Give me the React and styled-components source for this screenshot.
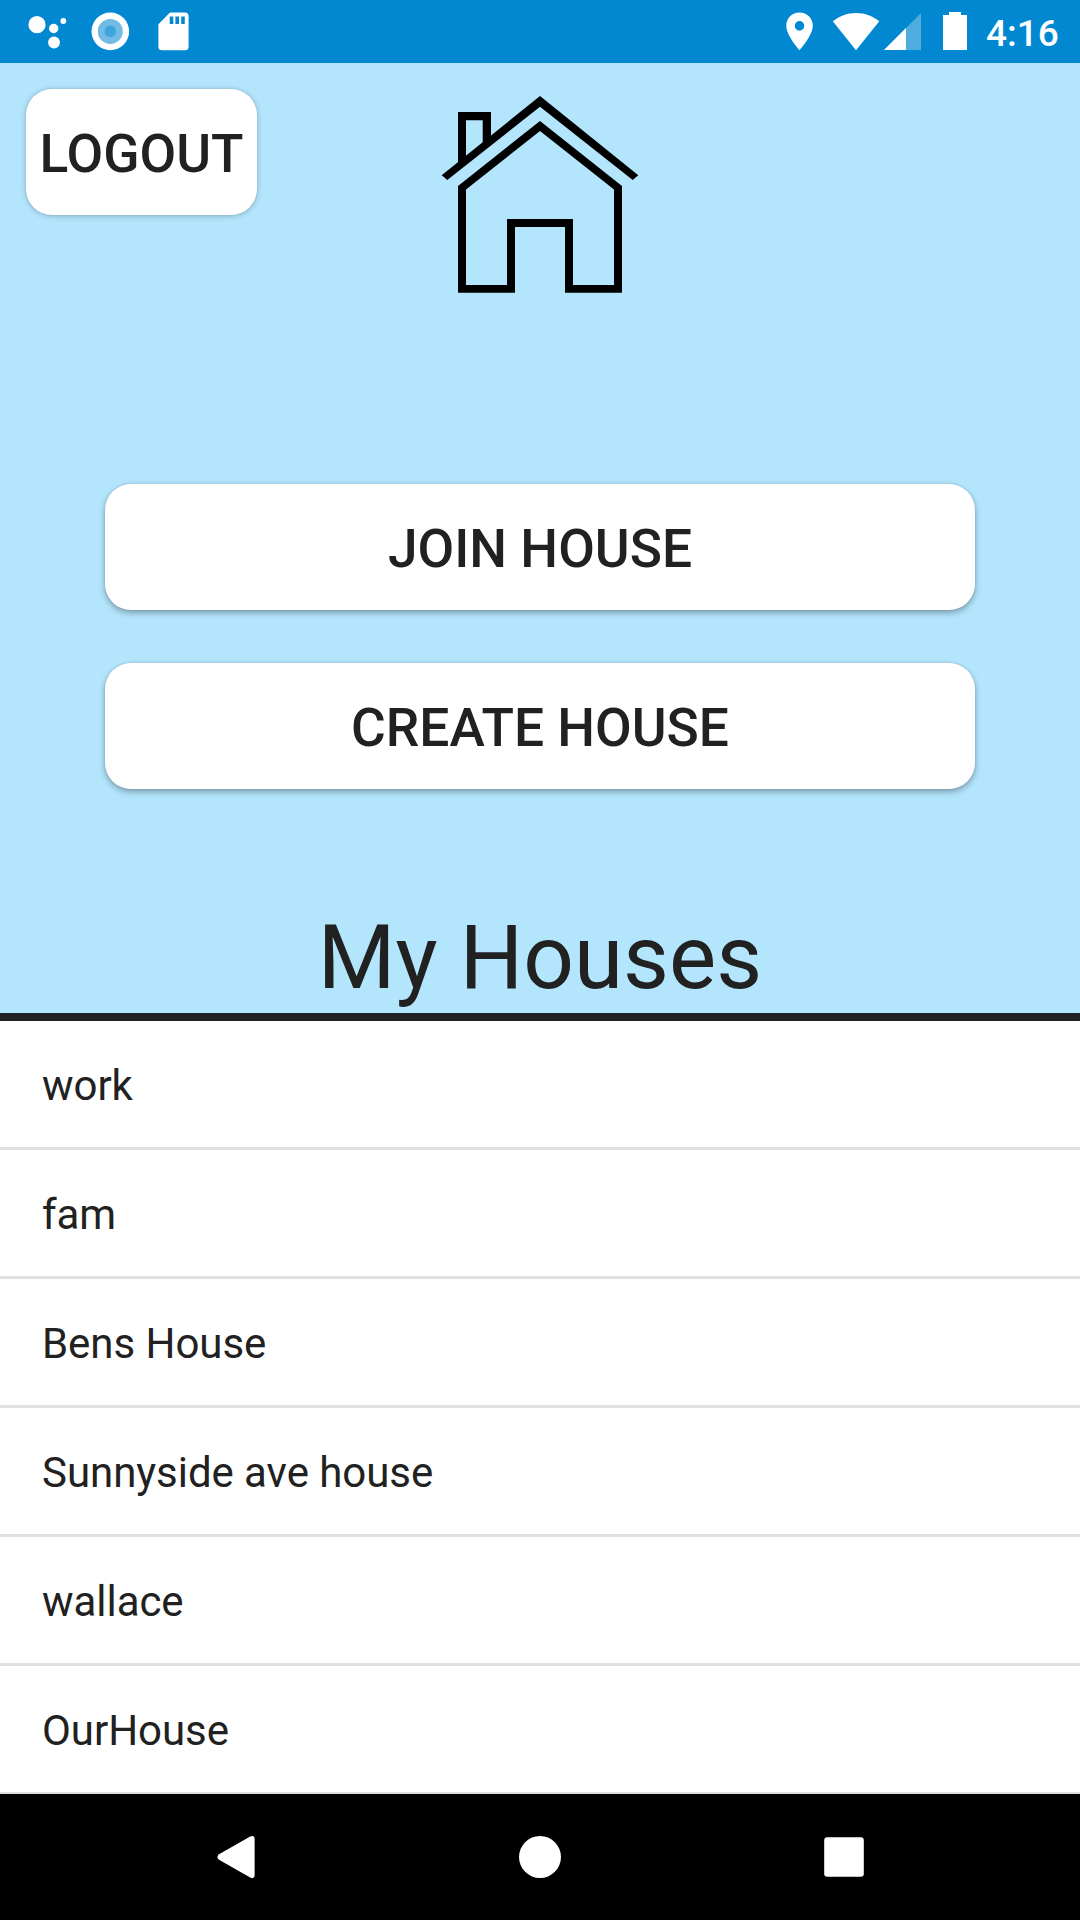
import React from "react";
import styled, { createGlobalStyle } from "styled-components";

const GlobalStyle = createGlobalStyle`
  *, *::before, *::after { box-sizing: border-box; }
  body { margin: 0; background: #fff; }
  button { font: inherit; border: 0; padding: 0; }
`;

const Screen = styled.div`
  display: flex;
  flex-direction: column;
  width: 1080px;
  height: 1920px;
  overflow: hidden;
  color: #212121;
  font-family: Roboto, "Liberation Sans", sans-serif;
`;

const StatusBar = styled.div`
  display: flex;
  flex: none;
  justify-content: space-between;
  height: 63px;
  background: #0288d1;
`;

const StatusGroup = styled.div`
  display: flex;
  padding: 0 ${(p) => p.$right || 0}px 0 ${(p) => p.$left || 0}px;
`;

const StatusIcon = styled.svg`
  display: block;
  flex: none;
  width: ${(p) => p.$width}px;
  height: 63px;
  margin-right: ${(p) => p.$gap || 0}px;
  fill: #fff;
`;

const Clock = styled.span`
  width: 74px;
  color: #fff;
  font-size: 37px;
  font-weight: 500;
  line-height: 68px;
  white-space: nowrap;
`;

const Panel = styled.section`
  display: flex;
  flex: none;
  flex-direction: column;
  height: 958px;
  background: #b3e5fc;
  border-bottom: 8px solid #212121;
`;

const TopRow = styled.header`
  display: grid;
  grid-template-columns: 1fr auto 1fr;
  align-items: start;
  height: 421px;
  padding: 26px 26px 0;
`;

const Button = styled.button`
  display: flex;
  align-items: center;
  justify-content: center;
  width: ${(p) => p.$width}px;
  height: 126px;
  padding-top: 4px;
  border-radius: 26px;
  background: #fff;
  color: #212121;
  font-size: 53.25px;
  font-weight: 500;
  line-height: 62px;
  white-space: nowrap;
  box-shadow: 0 ${(p) => (p.$flat ? 1 : 3)}px 6px rgba(0, 0, 0, ${(p) => (p.$flat ? 0.2 : 0.3)}),
    0 0 3px rgba(0, 0, 0, 0.12);
`;

const HouseLogo = styled.svg`
  display: block;
  width: 200px;
  height: 200px;
  margin-top: 4px;
`;

const Actions = styled.div`
  display: flex;
  flex-direction: column;
  align-items: center;
  gap: 53px;
`;

const Heading = styled.h1`
  margin: auto 0 0;
  font-size: 89px;
  font-weight: 400;
  line-height: 111px;
  text-align: center;
`;

const HouseList = styled.ul`
  flex: 1;
  min-height: 0;
  margin: 0;
  padding: 0;
  overflow: hidden;
  background: #fff;
  list-style: none;
`;

const HouseRow = styled.li`
  height: 129px;
  padding-left: 42px;
  border-bottom: 3px solid #e0e0e0;
  font-size: 42px;
  letter-spacing: -0.05px;
  line-height: 130px;
`;

const NavBar = styled.nav`
  display: flex;
  flex: none;
  align-items: center;
  justify-content: center;
  gap: 178px;
  height: 126px;
  background: #000;
`;

const NavButton = styled.button`
  display: flex;
  width: 126px;
  height: 126px;
  background: transparent;
`;

const NavIcon = styled.svg`
  width: 126px;
  height: 126px;
  fill: #fff;
`;

const houses = ["work", "fam", "Bens House", "Sunnyside ave house", "wallace", "OurHouse"];

const navItems = [
  { name: "Back", shape: <path d="M46 60.2 77.2 42.6Q81.6 40.8 81.6 45V81Q81.6 85.2 77.2 83.4L46 65.8Q42.8 63 46 60.2Z" /> },
  { name: "Home", shape: <circle cx="63" cy="63" r="21" /> },
  { name: "Recents", shape: <rect x="43.2" y="43.2" width="39.6" height="39.6" rx="3" /> },
];

export default function App() {
  return (
    <Screen>
      <GlobalStyle />
      <StatusBar>
        <StatusGroup $left={26}>
          <StatusIcon $width={42} $gap={21} viewBox="26 0 42 63">
            <circle cx="37" cy="24.7" r="8.6" />
            <circle cx="53.7" cy="28.5" r="4.7" />
            <circle cx="63.3" cy="21" r="2.9" />
            <circle cx="54" cy="42.5" r="5.9" />
          </StatusIcon>
          <StatusIcon $width={42} $gap={21} viewBox="89 0 42 63">
            <circle cx="110.3" cy="31.4" r="18.8" />
            <circle cx="110.3" cy="31.4" r="12.5" fill="#71bbe4" />
            <circle cx="110.3" cy="31.4" r="5.8" fill="#40a5dc" />
          </StatusIcon>
          <StatusIcon $width={42} viewBox="152 0 42 63">
            <path
              fillRule="evenodd"
              d="M170 12.6H185A3.6 3.6 0 0 1 188.6 16.2V46.7A3.6 3.6 0 0 1 185 50.3H162A3.6 3.6 0 0 1 158.4 46.7V24.2ZM169.7 16.4V24H173.3V16.4ZM175.4 16.4V24H179V16.4ZM181.2 16.4V24H184.8V16.4Z"
            />
          </StatusIcon>
        </StatusGroup>
        <StatusGroup $right={20}>
          <StatusIcon $width={30} $gap={18} viewBox="785 0 30 63">
            <path
              fillRule="evenodd"
              d="M799.5 12.6C792 12.6 786.3 18.4 786.3 25.8C786.3 35.8 799.5 50.2 799.5 50.2S812.8 35.8 812.8 25.8C812.8 18.4 807 12.6 799.5 12.6ZM799.5 21.1A4.8 4.8 0 1 1 799.5 30.7A4.8 4.8 0 1 1 799.5 21.1Z"
            />
          </StatusIcon>
          <StatusIcon $width={48} $gap={3} viewBox="833 0 48 63">
            <path d="M856 50.3 832.9 21.3C839 16.3 847 13 856 13S873.1 16.3 879.3 21.3Z" />
          </StatusIcon>
          <StatusIcon $width={38} $gap={20} viewBox="884 0 38 63">
            <path d="M921 13V50H884Z" opacity=".3" />
            <path d="M906 28V50H884Z" />
          </StatusIcon>
          <StatusIcon $width={26} $gap={18} viewBox="942 0 26 63">
            <path d="M949 12H961V15H967V50H943V15H949Z" />
          </StatusIcon>
          <Clock>4:16</Clock>
        </StatusGroup>
      </StatusBar>

      <Panel>
        <TopRow>
          <Button $width={231} $flat>LOGOUT</Button>
          <HouseLogo viewBox="440 93 200 200">
            <path d="M540 96 638.3 175.3 632.7 180 540 106.7 447.3 180 441.7 175.3Z" />
            <path d="M458 164V112H491V138L482.7 144.6V120.3H466V157.5Z" />
            <path
              fillRule="evenodd"
              d="M540 121 622 186V292.8H565V227H515V292.8H458V186ZM540 131 466 189.6V285H507V219H573V285H614V189.6Z"
            />
          </HouseLogo>
        </TopRow>
        <Actions>
          <Button $width={870}>JOIN HOUSE</Button>
          <Button $width={870}>CREATE HOUSE</Button>
        </Actions>
        <Heading>My Houses</Heading>
      </Panel>

      <HouseList>
        {houses.map((name) => (
          <HouseRow key={name}>{name}</HouseRow>
        ))}
      </HouseList>

      <NavBar>
        {navItems.map((item) => (
          <NavButton key={item.name} aria-label={item.name}>
            <NavIcon viewBox="0 0 126 126">{item.shape}</NavIcon>
          </NavButton>
        ))}
      </NavBar>
    </Screen>
  );
}
